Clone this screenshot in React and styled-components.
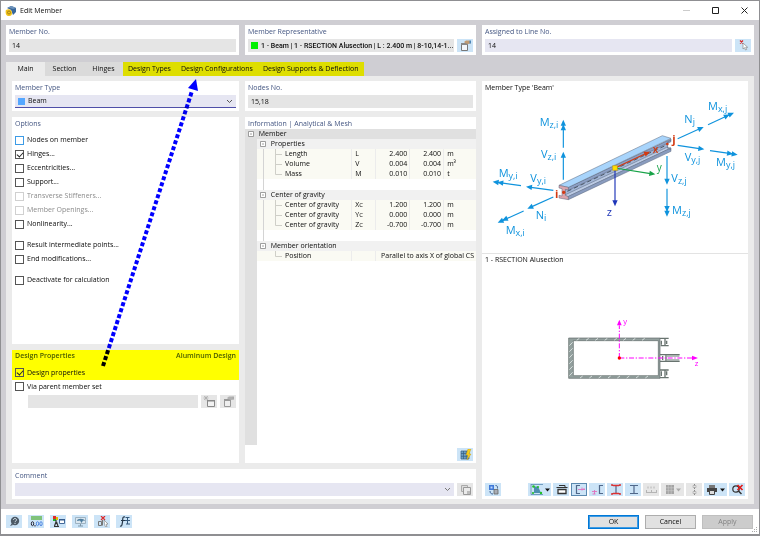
import React, { useState } from 'react'
import styled, { createGlobalStyle, css } from 'styled-components'

const GlobalStyle = createGlobalStyle`
  * {
    box-sizing: border-box;
  }
  body {
    margin: 0;
    background: #8f8f92;
    color: #0c0c0c;
    font-family: "Open Sans", "Noto Sans", sans-serif;
    font-size: 7px;
    line-height: 10px;
  }
  button, input, select {
    margin: 0;
    padding: 0;
    border: 0;
    border-radius: 0;
    color: inherit;
    font: inherit;
    outline: 0;
  }
  svg {
    display: block;
  }
`

const Window = styled.main`
  position: relative;
  display: flex;
  flex-direction: column;
  min-height: 100vh;
  border: 1px solid #8f8f92;
  border-bottom-width: 2px;
  background: #fff;
`

const TitleBar = styled.header`
  display: flex;
  align-items: center;
  height: 19px;
  padding-left: 4px;
`

const Title = styled.h1`
  flex: 1;
  margin: 0;
  padding-left: 3px;
  font-size: 7px;
  font-weight: 500;
`

const WindowButton = styled.button`
  display: grid;
  place-items: center;
  width: 29px;
  height: 18px;
  background: transparent;
`

const Body = styled.div`
  display: flex;
  flex: 1;
  flex-direction: column;
  padding: 5px;
  background: #cfced3;
`

const TopRow = styled.div`
  display: grid;
  grid-template-columns: 233fr 231fr 272fr;
  grid-auto-rows: 30px;
  gap: 6px;
`

const TabList = styled.div`
  display: flex;
  margin-top: 7px;
`

const Tab = styled.button`
  height: 14px;
  min-width: 39px;
  padding: 0 5px;
  background: ${props => props.$active ? '#ebebeb' : '#dadada'};
  font-weight: 500;
  white-space: nowrap;
  ${props => props.$marked && css`
    background: #dede00;
  `}
`

const Page = styled.div`
  display: grid;
  flex: 1;
  grid-template-columns: 227fr 231fr 266fr;
  grid-template-rows: 30px 1fr 30px;
  gap: 6px;
  padding: 5px 6px;
  background: #ebebeb;
`

const Panel = styled.section`
  display: flex;
  flex-direction: column;
  min-width: 0;
  padding: 1px 3px 3px;
  background: #fff;
`

const WidePanel = styled(Panel)`
  grid-column: 1 / 3;
`

const PreviewPanel = styled(Panel)`
  grid-column: 3;
  grid-row: 1 / 4;
  padding: 1px 0 3px;
`

const PanelTitle = styled.h2`
  margin: 0;
  color: #445682;
  font-size: 7px;
  font-weight: 500;
  line-height: 11px;
`

const FieldLabel = styled.label`
  color: #445682;
  font-weight: 500;
  line-height: 11px;
`

const FieldRow = styled.div`
  display: flex;
  gap: 3px;
  margin-top: auto;
`

const FieldBox = styled.div`
  display: flex;
  flex: 1;
  align-items: center;
  gap: 3px;
  min-width: 0;
  height: 13px;
  padding: 0 ${props => props.$tight ? '0' : '3px'} 0 3px;
  background: ${props => props.$editable ? '#e6e6f2' : '#e5e5e5'};
  border-bottom: ${props => props.$focused ? '1px solid #4f4fa8' : '0'};
`

const TextInput = styled.input`
  flex: 1;
  min-width: 0;
  height: 12px;
  background: transparent;
  font-weight: 500;
`

/* long summaries need a narrower face to fit the field */
const SummaryInput = styled(TextInput)`
  font-family: Roboto, "Open Sans", sans-serif;
`

const Select = styled.select`
  flex: 1;
  min-width: 0;
  height: 12px;
  appearance: none;
  background: transparent;
  font-weight: 500;
`

const Swatch = styled.span`
  width: 7px;
  height: 7px;
  background: ${props => props.$color};
`

const IconButton = styled.button`
  display: flex;
  flex: none;
  align-items: center;
  justify-content: center;
  gap: 2px;
  width: ${props => props.$menu ? '23px' : '16px'};
  height: 13px;
  background: ${props => props.disabled ? '#e6e6e6' : '#cce4f7'};
  border: ${props => props.$pressed ? '1px solid #5b89b0' : '0'};
`

const LeftColumn = styled.div`
  display: grid;
  grid-template-rows: 2fr 1fr;
  gap: 6px;
`

const OptionList = styled.div`
  display: flex;
  flex-direction: column;
  gap: 7px;
  margin-top: 4px;
`

const CheckRow = styled.label`
  display: flex;
  align-items: center;
  gap: 3px;
  height: 14px;
  color: ${props => props.$disabled ? '#8c8c8c' : 'inherit'};
  font-weight: ${props => props.$disabled ? 400 : 500};
`

const Checkbox = styled.input`
  position: relative;
  flex: none;
  width: 9px;
  height: 9px;
  appearance: none;
  border: 1px solid ${props => props.$hot ? '#3c9be6' : '#555'};
  &:disabled {
    border-color: #d0d0d0;
  }
  &:checked::after {
    position: absolute;
    top: 0;
    left: 2px;
    width: 3px;
    height: 5px;
    border: solid #222;
    border-width: 0 1px 1px 0;
    transform: rotate(42deg);
    content: "";
  }
`

const DesignPanel = styled(Panel)`
  padding: 0;
`

const Marked = styled.div`
  padding: 0 3px;
  background: #ff0;
`

const MarkedHead = styled.div`
  display: flex;
  justify-content: space-between;
  margin-bottom: 5px;
  ${PanelTitle} {
    color: #4a5c00;
    font-weight: 600;
  }
`

const ParentSet = styled.div`
  padding: 0 3px;
`

const ParentRow = styled(FieldRow)`
  margin-top: 1px;
  padding-left: 13px;
`

const InfoPanel = styled(Panel)`
  padding: 1px 0 2px;
  ${PanelTitle} {
    padding-left: 3px;
  }
`

const TableArea = styled.div`
  flex: 1;
  margin-bottom: 3px;
  background: linear-gradient(90deg, #e0e0e0 12px, #fff 12px);
`

const InfoTable = styled.table`
  width: 100%;
  table-layout: fixed;
  border-collapse: collapse;
  font-weight: 500;
  th, td {
    height: 10px;
    padding: 0;
    font-weight: 500;
    line-height: 10px;
    text-align: left;
    white-space: nowrap;
  }
`

const MemberRow = styled.tr`
  background: #e0e0e0;
`

const GroupRow = styled.tr`
  th + th {
    background: #f1f1f1;
  }
`

const treeLine = css`
  background-image: linear-gradient(#d4d4d4, #d4d4d4);
  background-position: 6px 0;
  background-repeat: no-repeat;
  background-size: 1px 100%;
`

const SpacerRow = styled.tr`
  && td {
    height: 11px;
  }
  td + td {
    ${treeLine}
  }
`

const DataRow = styled.tr`
  td, th {
    background: #fafaf3;
  }
  td {
    border-left: 1px solid #ececec;
  }
  && td:first-child {
    border: 0;
    background: #e0e0e0;
  }
  th {
    ${props => !props.$end && treeLine}
  }
`

const TreeLabel = styled.span`
  display: flex;
  align-items: center;
  gap: 3px;
  padding-left: ${props => props.$indent || 0}px;
`

const ValueCell = styled.td`
  && {
    padding-right: 2px;
    text-align: right;
  }
`

const UnitCell = styled.td`
  && {
    padding-left: 3px;
  }
`

const SmallCap = styled.span`
  font-size: 6px;
`

const Corner = styled.div`
  display: flex;
  justify-content: flex-end;
  padding-right: 3px;
`

const Preview = styled.div`
  padding-bottom: 1px;
  border-bottom: ${props => props.$line ? '1px solid #e3e3e3' : '0'};
  svg {
    width: 100%;
  }
`

const PreviewTitle = styled.h3`
  margin: 0;
  padding: 0 3px 1px;
  font-size: 7px;
  font-weight: 500;
  line-height: 11px;
`

const Toolbar = styled.div`
  display: flex;
  gap: 2px;
  margin-top: auto;
  padding: 0 3px;
`

const Push = styled.span`
  flex: 1;
`

const Footer = styled.footer`
  position: relative;
  display: flex;
  align-items: center;
  gap: 6px;
  height: 25px;
  padding: 0 6px 0 5px;
`

const DialogButton = styled.button`
  width: 51px;
  height: 14px;
  border: 1px solid #adadad;
  background: #e1e1e1;
  font-weight: 500;
  ${props => props.$primary && css`
    border: 1px solid #0078d7;
    box-shadow: inset 0 0 0 1px #3f9be3;
  `}
  &:disabled {
    border-color: #bfbfbf;
    background: #ccc;
    color: #838383;
  }
`

const Grip = styled.svg`
  position: absolute;
  right: 1px;
  bottom: 1px;
`

const Pointer = styled.svg`
  position: absolute;
  top: 78px;
  left: 98px;
  mix-blend-mode: multiply;
  pointer-events: none;
`

/* ---------- icons ---------- */

const Svg = ({ w = 13, h = 11, children }) => (
  <svg width={w} height={h} viewBox={`0 0 ${w} ${h}`} fill="none" aria-hidden="true">{children}</svg>
)

const AppIcon = () => (
  <Svg w={12} h={12}>
    <path d="M2 3 6 1l5 2v4L8 10 6 5z" fill="#38679b" />
    <path d="M3 2.500 7 1l4 2-3 1z" fill="#6d93bb" />
    <path d="M1 5c3-2 6 0 6 3s-2 3-4 3-3-4-2-6z" fill="#efc21c" />
    <circle cx="4" cy="7.500" r="1.500" stroke="#8c6a10" strokeWidth=".7" />
  </Svg>
)

const Chevron = ({ color = '#555' }) => (
  <Svg w={7} h={5}><path d="m1 1 2.500 2.500L6 1" stroke={color} /></Svg>
)

const Caret = ({ color = '#111' }) => (
  <Svg w={5} h={4}><path d="M0 .5h5L2.500 3.500z" fill={color} /></Svg>
)

const EditCardIcon = ({ dim }) => (
  <Svg>
    <path d="M2.500 3.500h6v7h-6z" fill={dim ? '#eee' : '#f3f6fa'} stroke={dim ? '#999' : '#777'} />
    <path d="M2 3h7v2H2z" fill={dim ? '#999' : '#888'} />
    <path d="m5 2 2-1.500h3.500l1 1v2L9 4 6 3z" fill={dim ? '#b0b0b0' : '#c09a72'} />
    <path d="M10.500.5H12v3h-1.500z" fill={dim ? '#aaa' : '#4d86b8'} />
  </Svg>
)

const NewCardIcon = () => (
  <Svg>
    <path d="M4.500 4.500h7v6h-7z" fill="#f2f2f2" stroke="#888" />
    <path d="M4 4h8v1.500H4z" fill="#888" />
    <path d="m1 0 4 4M5 0 1 4M3 0v4.500M.5 2h5" stroke="#aaa" strokeWidth=".7" />
  </Svg>
)

const PickIcon = () => (
  <Svg>
    <path d="m3 .5 3 3M6 .5l-3 3" stroke="#d82727" strokeWidth="1.200" />
    <path d="M6 3v6l1.500-1.300 1 2.300 1.200-.5-1-2.200h2z" fill="#fff" stroke="#888" strokeWidth=".7" />
  </Svg>
)

const CopyIcon = () => (
  <Svg>
    <path d="M2.500 1.500h6v6h-6z" fill="#ddd" stroke="#aaa" />
    <path d="M4.500 3.500h7v7h-7z" fill="#eaeaea" stroke="#999" />
    <path d="M8 7h3v3H8z" fill="#bbb" />
  </Svg>
)

const TableFlashIcon = () => (
  <Svg>
    <path d="M2 2h8v8H2z" fill="#6fa0c6" />
    <path d="M2 2h8v8H2zM4.500 2v8M7.300 2v8M2 4.500h8M2 7.300h8" stroke="#355d80" strokeWidth=".7" />
    <path d="m9 0-2 6h2l-1 5 4-6h-2l2-5z" fill="#f7cd1c" stroke="#c99a00" strokeWidth=".4" />
  </Svg>
)

const SwapIcon = () => (
  <Svg>
    <path d="M2 1h5v5H2z" fill="#3f79d8" />
    <path d="M3.500 2.500h2v2h-2z" fill="#bcd6ff" />
    <path d="M7 5.500h4v4.500H7z" fill="#a9adb5" stroke="#666" strokeWidth=".8" />
    <path d="M3 7c0 2 1 3 3 3M8.500 1.500c2 0 2 1 2 3" stroke="#3b5f93" />
  </Svg>
)

const ViewIcon = () => (
  <Svg>
    <path d="M1 0v10.500H13M1 .5h12" stroke="#5b89b0" strokeWidth=".8" />
    <path d="M4 2.500h4l3 6.500H4z" fill="#4c8fae" />
    <circle cx="3.500" cy="2.500" r="1.300" fill="#1fc225" />
    <circle cx="8" cy="3" r="1" fill="#1fc225" />
    <circle cx="11" cy="9" r="1.200" fill="#1fc225" />
    <circle cx="3" cy="9" r="1.100" fill="#1fc225" />
  </Svg>
)

const BoxIcon = () => (
  <Svg>
    <path d="M3 5.500h8v4H3z" fill="#fff" stroke="#333" strokeWidth="1.300" />
    <path d="M1.500 3.500h11M4 1.500h6v2" stroke="#333" />
  </Svg>
)

const ChannelIcon = ({ side }) => (
  <Svg>
    <path d={side ? 'M12 1.500H8.500v8H12' : 'M7 1.500H3.500v8H7'} stroke="#50688a" strokeWidth="1.200" />
    <path d={side ? 'M1 7.500h5M1.500 10h3M3.500 6v4' : 'M5 5.500h7M9 3.500v3M11 4v2'} stroke="#e070bd" strokeWidth=".9" />
  </Svg>
)

const BeamIcon = ({ accent }) => (
  <Svg>
    <path d="M3 1.500h8M3 9.500h8M7 1.500v8" stroke="#50688a" strokeWidth="1.200" />
    {accent && <path d="M2 1h2M10 1h2M2 10h2M10 10h2M4 1.500h6M4 9.500h6" stroke="#e03030" strokeWidth="1.300" />}
  </Svg>
)

const RulerIcon = () => (
  <Svg><path d="M1 8.500h11M1.500 6v3M6.500 6v3M11.500 6v3M3 2.500v2M6 2.500v2M9 2.500v2" stroke="#b4b4b4" /></Svg>
)

const GridIcon = () => (
  <Svg w={9}>
    <path d="M1 1h8v9H1z" fill="#a4a4a4" />
    <path d="M3.300 1v9M6.200 1v9M1 3.800h8M1 6.700h8" stroke="#ccc" strokeWidth=".6" />
  </Svg>
)

const DotsIcon = () => (
  <Svg><path d="M6.500 0v11" stroke="#888" strokeDasharray="2 1" /><path d="M5 1.500h3v2H5zM5 7.500h3v2H5z" stroke="#b0b0b0" strokeWidth=".8" /></Svg>
)

const PrinterIcon = () => (
  <Svg w={12}>
    <path d="M3 1h6v3H3z" fill="#777" />
    <path d="M1 4h10v4H1z" fill="#444" />
    <path d="M3.500 6.500h5v4h-5z" fill="#ddd" stroke="#444" />
  </Svg>
)

const ZoomOffIcon = () => (
  <Svg>
    <circle cx="5" cy="5" r="3.200" stroke="#333" strokeWidth="1.200" />
    <path d="m7.500 7 3 3" stroke="#333" strokeWidth="1.500" />
    <path d="m6.500 1 5 5M11.500 1l-5 5" stroke="#e01b1b" strokeWidth="1.700" />
  </Svg>
)

const HelpIcon = () => (
  <Svg>
    <circle cx="7" cy="5" r="4.200" fill="#4d5a66" />
    <path d="m4 7-2 3 3-1z" fill="#4d5a66" />
    <path d="M5.500 4c0-2 3-2 3 0 0 1-1.500 1-1.500 2.200M7 7v1" stroke="#dceaf5" />
  </Svg>
)

const UnitsIcon = () => (
  <Svg>
    <path d="M1 0h11v4H1z" fill="#7fc27a" />
    <ellipse cx="2.500" cy="7.700" rx="1.200" ry="2" stroke="#223" />
    <path d="M5 9v1.500" stroke="#223" />
    <ellipse cx="7.500" cy="7.700" rx="1.200" ry="2" stroke="#4c84e0" />
    <ellipse cx="11" cy="7.700" rx="1.200" ry="2" stroke="#4c84e0" />
  </Svg>
)

const ModelIcon = () => (
  <Svg>
    <path d="M1 0h3v3H1z" fill="#e02a2a" /><path d="M1 3h3v2H1z" fill="#20b030" />
    <path d="M4 1h2v3H4z" fill="#e3b900" />
    <path d="M4 4v4M2 10.500h5M4 6l-1.500 4M4.500 6 6 10" stroke="#333" strokeWidth="1.200" />
    <path d="M7.500 3.500h5v4h-5z" fill="#fff" stroke="#456a9a" /><path d="M7 3h6v1.500H7z" fill="#345b8c" />
  </Svg>
)

const CloudIcon = () => (
  <Svg>
    <path d="M1.500 1.500h10v6h-10z" fill="#d9e6ef" stroke="#9db2c2" />
    <path d="M3 5c0-3 7-3 8 0l-2-.5L7.500 7 6 4.500z" fill="#4c7c9e" />
    <path d="M4 10h5M6.500 8v2" stroke="#7d96a8" />
  </Svg>
)

const SelectIcon = () => (
  <Svg>
    <path d="M2.500 5.500h3v4h-3zM6.500 4v5.500" stroke="#777" />
    <path d="m5 0 4 4M9 0 5 4" stroke="#dc2b2b" strokeWidth="1.200" />
    <path d="m8 4 4 4-2 .3L11 11 9.500 11 8.500 8.500z" fill="#fff" stroke="#777" strokeWidth=".6" />
  </Svg>
)

const FormulaIcon = () => (
  <Svg>
    <path d="M7 1C4 .5 5 3 4.500 6S4 10.500 2 10M3 4.500h4" stroke="#26384a" strokeWidth="1.200" />
    <path d="M7.500 1.500h4M7 4.500h5M8 8h4M9.500 1v7" stroke="#35597c" />
  </Svg>
)

/* ---------- drawings ---------- */

const head = (x, y, ux, uy, key) => {
  const bx = x - ux * 18
  const by = y - uy * 18
  return <path key={key} d={`M${x} ${y} L${bx - uy * 8} ${by + ux * 8} L${bx + uy * 8} ${by - ux * 8}z`} stroke="none" />
}

const Arrow = ({ from, to, color = '#0f93dd', double }) => {
  const dx = to[0] - from[0]
  const dy = to[1] - from[1]
  const len = Math.hypot(dx, dy)
  const ux = dx / len
  const uy = dy / len
  return (
    <g stroke={color} fill={color} strokeWidth="3.500">
      <path d={`M${from[0]} ${from[1]} L${to[0] - ux * 15} ${to[1] - uy * 15}`} />
      {head(to[0], to[1], ux, uy, 'a')}
      {double && head(to[0] - ux * 14, to[1] - uy * 14, ux, uy, 'b')}
    </g>
  )
}

const forces = [
  { name: 'M', sub: 'z,i', at: [179, 141], from: [250, 206], to: [250, 122], double: true },
  { name: 'V', sub: 'z,i', at: [183, 236], from: [250, 302], to: [250, 218] },
  { name: 'M', sub: 'y,i', at: [56, 294], from: [123, 320], to: [38, 308], double: true },
  { name: 'V', sub: 'y,i', at: [151, 308], from: [220, 334], to: [138, 323] },
  { name: 'N', sub: 'i', at: [167, 419], from: [220, 354], to: [142, 389] },
  { name: 'M', sub: 'x,i', at: [77, 465], from: [131, 396], to: [53, 431], double: true },
  { name: 'N', sub: 'j', at: [613, 133], from: [593, 179], to: [671, 144] },
  { name: 'M', sub: 'x,j', at: [684, 94], from: [684, 137], to: [762, 101], double: true },
  { name: 'V', sub: 'y,j', at: [614, 247], from: [593, 199], to: [673, 211] },
  { name: 'M', sub: 'y,j', at: [708, 262], from: [690, 215], to: [773, 227], double: true },
  { name: 'V', sub: 'z,j', at: [574, 308], from: [561, 231], to: [561, 317] },
  { name: 'M', sub: 'z,j', at: [576, 405], from: [561, 329], to: [561, 413], double: true },
]

const BeamDrawing = () => (
  <svg viewBox="6 45 798 474" fill="none" role="img" aria-label="Beam with internal forces">
    <g stroke="#59667c" strokeWidth="1.500" strokeLinejoin="round">
      <path d="M256 331 562 187v24L256 352z" fill="#a3b6d6" />
      <path d="M250 350 560 205l13 2-308 146z" fill="#bccbe4" />
      <path d="M265 352 573 207v10L265 362z" fill="#8a9cbf" />
      <path d="M265 325 573 180v8L265 334z" fill="#8c9fc4" />
      <path d="m237 319 310-149 26 8-308 147z" fill="#a8d4fb" />
      <path d="m237 319 28 6v8l-9-2v18l9 4v9l-28-5v-8l9 2v-22l-9-2z" fill="#dba4ac" />
    </g>
    <path d="m262 337 298-139" stroke="#3f4855" strokeWidth="2.500" strokeDasharray="13 9" />
    <path d="m563 188 10-4M563 188v20l10 4" stroke="#59667c" strokeWidth="1.500" />
    <circle cx="251" cy="340" r="5" fill="#d33a12" />
    <circle cx="562" cy="195" r="4" fill="#d33a12" />
    {forces.map(f => <Arrow key={f.name + f.sub} {...f} />)}
    <Arrow from={[405, 267]} to={[510, 218]} color="#d33a12" />
    <Arrow from={[405, 267]} to={[526, 286]} color="#18a348" />
    <Arrow from={[405, 267]} to={[405, 382]} color="#1f36b8" />
    <path d="M398 260h14v14h-14z" fill="#ffde00" stroke="#c79b00" strokeWidth="1.500" />
    <g fill="#0f93dd" fontSize="33">
      {forces.map(f => (
        <text key={f.name + f.sub} x={f.at[0]} y={f.at[1]}>
          {f.name}<tspan dy="6" fontSize="27">{f.sub}</tspan>
        </text>
      ))}
    </g>
    <g fontSize="33">
      <text x="225" y="357" fill="#d33a12" fontWeight="700">i</text>
      <text x="577" y="191" fill="#d33a12" fontWeight="700">j</text>
      <text x="518" y="222" fill="#d33a12" fontSize="30" fontWeight="600">x</text>
      <text x="530" y="276" fill="#18a348" fontSize="30" fontWeight="500">y</text>
      <text x="380" y="410" fill="#1f36b8" fontWeight="500">z</text>
    </g>
  </svg>
)

const SectionDrawing = () => (
  <svg viewBox="-204 -102 798 642" fill="none" role="img" aria-label="Alusection cross-section">
    <path fillRule="evenodd" d="M56 114h274v121H56zM70 122v105h255V122z" fill="#93a09e" stroke="#5d6866" strokeWidth="2" />
    <path d="m58 137 10-10m-10 28 10-10m-10 28 10-10m-10 28 10-10m-10 28 10-10m-10 28 10-10M80 121l8-6m20 6 8-6m20 6 8-6m20 6 8-6m20 6 8-6m20 6 8-6m20 6 8-6m20 6 8-6M90 234l8-6m20 6 8-6m20 6 8-6m20 6 8-6m20 6 8-6m20 6 8-6m20 6 8-6m20 6 8-6" stroke="#e6eceb" strokeWidth="2.500" />
    <g stroke="#68736f" strokeWidth="4">
      <path d="M330 115h26M332 137h24M345 116v20M334 122v12M350 122v10" />
      <path d="M330 210h26M330 233h26M345 211v20M334 214v14M350 214v12" />
      <path d="M330 164h59M330 184h59M348 165v18M338 168v12" />
      <path d="M350 168h38M350 180h38" stroke="#9aa5a3" />
    </g>
    <path d="M208 174V76M208 174h220" stroke="#f0f" strokeWidth="3" strokeDasharray="15 5 4 5" />
    <path d="m208 59 7 17h-14zM444 174l-18 7v-14z" fill="#f0f" />
    <circle cx="208" cy="174" r="5" fill="#f00" />
    <g fill="#f0f" fontSize="23">
      <text x="220" y="72">y</text>
      <text x="434" y="198">z</text>
    </g>
  </svg>
)

const TreeBox = () => (
  <Svg w={6} h={6}><path d="M.5.5h5v5h-5zM2 3h2" fill="#fff" stroke="#888" strokeWidth=".8" /></Svg>
)

const Branch = ({ last }) => (
  <Svg w={7} h={10}><path d={last ? 'M.5 0v5.500H7' : 'M.5 0v10M.5 5.500H7'} stroke="#cfcfc8" /></Svg>
)

/* ---------- data ---------- */

const tabs = [
  { label: 'Main' },
  { label: 'Section' },
  { label: 'Hinges' },
  { label: 'Design Types', marked: true },
  { label: 'Design Configurations', marked: true },
  { label: 'Design Supports & Deflection', marked: true },
]

const options = [
  [
    { label: 'Nodes on member', hot: true },
    { label: 'Hinges...', checked: true },
    { label: 'Eccentricities...' },
    { label: 'Support...' },
    { label: 'Transverse Stiffeners...', disabled: true },
    { label: 'Member Openings...', disabled: true },
    { label: 'Nonlinearity...' },
  ],
  [
    { label: 'Result intermediate points...' },
    { label: 'End modifications...' },
  ],
  [
    { label: 'Deactivate for calculation' },
  ],
]

const groups = [
  {
    title: 'Properties',
    rows: [
      ['Length', 'L', '2.400', 'm'],
      ['Volume', 'V', '0.004', 'm³'],
      ['Mass', 'M', '0.010', 't'],
    ],
  },
  {
    title: 'Center of gravity',
    rows: [
      ['Center of gravity', 'XC', '1.200', 'm'],
      ['Center of gravity', 'YC', '0.000', 'm'],
      ['Center of gravity', 'ZC', '-0.700', 'm'],
    ],
  },
]

const Check = ({ label, checked, disabled, hot }) => (
  <CheckRow $disabled={disabled}>
    <Checkbox type="checkbox" defaultChecked={checked} disabled={disabled} $hot={hot} />
    {label}
  </CheckRow>
)

const InfoGrid = () => (
  <InfoTable>
    <colgroup>
      <col style={{ width: '5.2%' }} />
      <col style={{ width: '41%' }} />
      <col style={{ width: '10.4%' }} />
      <col style={{ width: '14.7%' }} />
      <col style={{ width: '14.7%' }} />
      <col />
    </colgroup>
    <tbody>
      <MemberRow>
        <th colSpan={6}><TreeLabel $indent={3}><TreeBox />&nbsp;Member</TreeLabel></th>
      </MemberRow>
      {groups.map(group => (
        <React.Fragment key={group.title}>
          <GroupRow>
            <th />
            <th colSpan={5}><TreeLabel $indent={3}><TreeBox />&nbsp;{group.title}</TreeLabel></th>
          </GroupRow>
          {group.rows.map(([name, symbol, value, unit], i) => (
            <DataRow key={symbol}>
              <td />
              <th><TreeLabel $indent={18}><Branch last={i === group.rows.length - 1} />{name}</TreeLabel></th>
              <UnitCell>{symbol[0]}<SmallCap>{symbol.slice(1)}</SmallCap></UnitCell>
              <ValueCell>{value}</ValueCell>
              <ValueCell>{value}</ValueCell>
              <UnitCell>{unit}</UnitCell>
            </DataRow>
          ))}
          <SpacerRow><td /><td colSpan={5} /></SpacerRow>
        </React.Fragment>
      ))}
      <GroupRow>
        <th />
        <th colSpan={5}><TreeLabel $indent={3}><TreeBox />&nbsp;Member orientation</TreeLabel></th>
      </GroupRow>
      <DataRow $end>
        <td />
        <th><TreeLabel $indent={18}><Branch last />Position</TreeLabel></th>
        <td />
        <ValueCell colSpan={3}>Parallel to axis X of global CS</ValueCell>
      </DataRow>
    </tbody>
  </InfoTable>
)

export default function App() {
  const [active, setActive] = useState('Main')

  return (
    <>
      <GlobalStyle />
      <Window>
        <TitleBar>
          <AppIcon />
          <Title>Edit Member</Title>
          <WindowButton aria-label="Minimize"><Svg w={7} h={7}><path d="M0 3.500h7" stroke="#ccc" /></Svg></WindowButton>
          <WindowButton aria-label="Maximize"><Svg w={7} h={7}><path d="M.5.5h6v6h-6z" stroke="#222" /></Svg></WindowButton>
          <WindowButton aria-label="Close"><Svg w={7} h={7}><path d="m.5.5 6 6M6.500.5l-6 6" stroke="#222" /></Svg></WindowButton>
        </TitleBar>
        <Body>
          <TopRow>
            <Panel>
              <FieldLabel htmlFor="member-no">Member No.</FieldLabel>
              <FieldRow>
                <FieldBox><TextInput id="member-no" defaultValue="14" readOnly /></FieldBox>
              </FieldRow>
            </Panel>
            <Panel>
              <FieldLabel htmlFor="representative">Member Representative</FieldLabel>
              <FieldRow>
                <FieldBox $tight>
                  <Swatch $color="#00f000" />
                  <SummaryInput id="representative" defaultValue="1 - Beam | 1 - RSECTION Alusection | L : 2.400 m | 8-10,14-1..." readOnly />
                </FieldBox>
                <IconButton aria-label="Edit representative"><EditCardIcon /></IconButton>
              </FieldRow>
            </Panel>
            <Panel>
              <FieldLabel htmlFor="line-no">Assigned to Line No.</FieldLabel>
              <FieldRow>
                <FieldBox $editable><TextInput id="line-no" defaultValue="14" /></FieldBox>
                <IconButton aria-label="Pick line"><PickIcon /></IconButton>
              </FieldRow>
            </Panel>
          </TopRow>

          <TabList role="tablist">
            {tabs.map(tab => (
              <Tab
                key={tab.label}
                role="tab"
                aria-selected={active === tab.label}
                $active={active === tab.label}
                $marked={tab.marked}
                onClick={() => setActive(tab.label)}
              >
                {tab.label}
              </Tab>
            ))}
          </TabList>

          <Page>
            <Panel>
              <FieldLabel htmlFor="member-type">Member Type</FieldLabel>
              <FieldRow>
                <FieldBox $editable $focused>
                  <Swatch $color="#55a7ff" />
                  <Select id="member-type" defaultValue="Beam"><option>Beam</option></Select>
                  <Chevron />
                </FieldBox>
              </FieldRow>
            </Panel>
            <Panel>
              <FieldLabel htmlFor="nodes-no">Nodes No.</FieldLabel>
              <FieldRow>
                <FieldBox><TextInput id="nodes-no" defaultValue="15,18" readOnly /></FieldBox>
              </FieldRow>
            </Panel>

            <PreviewPanel>
              <Preview $line>
                <PreviewTitle>Member Type 'Beam'</PreviewTitle>
                <BeamDrawing />
              </Preview>
              <Preview>
                <PreviewTitle>1 - RSECTION Alusection</PreviewTitle>
                <SectionDrawing />
              </Preview>
              <Toolbar>
                <IconButton aria-label="Swap"><SwapIcon /></IconButton>
                <Push />
                <IconButton aria-label="View" $menu><ViewIcon /><Caret /></IconButton>
                <IconButton aria-label="Dimensions"><BoxIcon /></IconButton>
                <IconButton aria-label="Axes" $pressed><ChannelIcon /></IconButton>
                <IconButton aria-label="Side axes"><ChannelIcon side /></IconButton>
                <IconButton aria-label="Stress points"><BeamIcon accent /></IconButton>
                <IconButton aria-label="Section"><BeamIcon /></IconButton>
                <IconButton aria-label="Numbering" disabled><RulerIcon /></IconButton>
                <IconButton aria-label="Grid" disabled $menu><GridIcon /><Caret color="#aaa" /></IconButton>
                <IconButton aria-label="Parts" disabled><DotsIcon /></IconButton>
                <IconButton aria-label="Print" $menu><PrinterIcon /><Caret /></IconButton>
                <IconButton aria-label="Reset zoom"><ZoomOffIcon /></IconButton>
              </Toolbar>
            </PreviewPanel>

            <LeftColumn>
              <Panel>
                <PanelTitle>Options</PanelTitle>
                <OptionList>
                  {options.map((group, i) => (
                    <div key={i}>
                      {group.map(option => <Check key={option.label} {...option} />)}
                    </div>
                  ))}
                </OptionList>
              </Panel>
              <DesignPanel>
                <Marked>
                  <MarkedHead>
                    <PanelTitle>Design Properties</PanelTitle>
                    <PanelTitle>Aluminum Design</PanelTitle>
                  </MarkedHead>
                  <Check label="Design properties" checked />
                </Marked>
                <ParentSet>
                  <Check label="Via parent member set" />
                  <ParentRow>
                    <FieldBox><TextInput aria-label="Parent member set" disabled /></FieldBox>
                    <IconButton aria-label="New member set" disabled><NewCardIcon /></IconButton>
                    <IconButton aria-label="Edit member set" disabled><EditCardIcon dim /></IconButton>
                  </ParentRow>
                </ParentSet>
              </DesignPanel>
            </LeftColumn>

            <InfoPanel>
              <PanelTitle>Information | Analytical &amp; Mesh</PanelTitle>
              <TableArea><InfoGrid /></TableArea>
              <Corner>
                <IconButton aria-label="Table settings"><TableFlashIcon /></IconButton>
              </Corner>
            </InfoPanel>

            <WidePanel>
              <FieldLabel htmlFor="comment">Comment</FieldLabel>
              <FieldRow>
                <FieldBox $editable>
                  <Select id="comment"><option></option></Select>
                  <Chevron color="#777" />
                </FieldBox>
                <IconButton aria-label="Copy comment" disabled><CopyIcon /></IconButton>
              </FieldRow>
            </WidePanel>
          </Page>
        </Body>

        <Footer>
          <IconButton aria-label="Help"><HelpIcon /></IconButton>
          <IconButton aria-label="Units"><UnitsIcon /></IconButton>
          <IconButton aria-label="Model"><ModelIcon /></IconButton>
          <IconButton aria-label="Display"><CloudIcon /></IconButton>
          <IconButton aria-label="Select"><SelectIcon /></IconButton>
          <IconButton aria-label="Formula"><FormulaIcon /></IconButton>
          <Push />
          <DialogButton $primary>OK</DialogButton>
          <DialogButton>Cancel</DialogButton>
          <DialogButton disabled>Apply</DialogButton>
          <Grip width="6" height="6" aria-hidden="true">
            <path d="M4 0h1v1H4zM2 2h1v1H2zM4 2h1v1H4zM0 4h1v1H0zM2 4h1v1H2zM4 4h1v1H4z" fill="#aaa" />
          </Grip>
        </Footer>

        <Pointer width="104" height="294" viewBox="99 79 104 294" aria-hidden="true">
          <path d="M103 366 192 91" stroke="#00f" strokeWidth="4" strokeDasharray="4 2.300" />
          <path d="m196 79-8 9 10 3z" fill="#00f" />
        </Pointer>
      </Window>
    </>
  )
}
